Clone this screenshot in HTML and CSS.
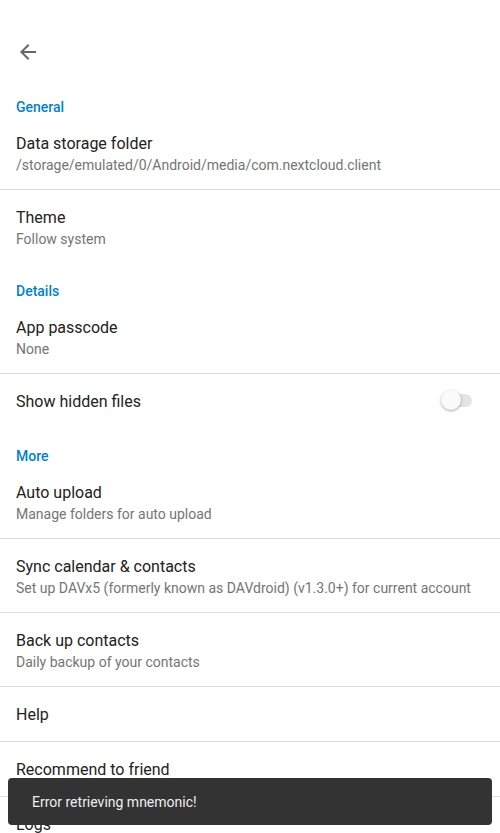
FILE: index.html
```html
<!DOCTYPE html>
<html lang="en">
<head>
    <meta charset="UTF-8">
    <meta name="viewport" content="width=device-width, initial-scale=1.0">
    <title>Settings</title>
    <link rel="stylesheet" href="styles.css">
</head>
<body>
    <header class="toolbar">
        <svg class="back" viewBox="0 0 24 24" width="24" height="24">
            <path d="M20 11H7.83l5.59-5.59L12 4l-8 8 8 8 1.41-1.41L7.83 13H20v-2z"/>
        </svg>
    </header>

    <h2 class="category">General</h2>
    <div class="pref divided">
        <div class="title">Data storage folder</div>
        <div class="summary">/storage/emulated/0/Android/media/com.nextcloud.client</div>
    </div>
    <div class="pref">
        <div class="title">Theme</div>
        <div class="summary">Follow system</div>
    </div>

    <h2 class="category">Details</h2>
    <div class="pref divided">
        <div class="title">App passcode</div>
        <div class="summary">None</div>
    </div>
    <div class="pref switch-row">
        <div class="title">Show hidden files</div>
        <span class="switch"><span class="thumb"></span></span>
    </div>

    <h2 class="category">More</h2>
    <div class="pref divided">
        <div class="title">Auto upload</div>
        <div class="summary">Manage folders for auto upload</div>
    </div>
    <div class="pref divided">
        <div class="title">Sync calendar &amp; contacts</div>
        <div class="summary">Set up DAVx5 (formerly known as DAVdroid) (v1.3.0+) for current account</div>
    </div>
    <div class="pref divided">
        <div class="title">Back up contacts</div>
        <div class="summary">Daily backup of your contacts</div>
    </div>
    <div class="pref divided">
        <div class="title">Help</div>
    </div>
    <div class="pref divided">
        <div class="title">Recommend to friend</div>
    </div>
    <div class="pref divided">
        <div class="title">Logs</div>
    </div>

    <div class="snackbar">Error retrieving mnemonic!</div>
</body>
</html>
```

FILE: styles.css
```css
body {
    font-family: Roboto, "Noto Sans", sans-serif;
    margin: 0;
    padding: 0;
    background-color: #fff;
    overflow: hidden;
}
.toolbar {
    height: 79px;
    display: flex;
    align-items: flex-end;
    padding-left: 16px;
    box-sizing: border-box;
    padding-bottom: 15px;
}
.back {
    fill: #666;
}
.category {
    margin: 0;
    padding: 20px 16px 1px;
    font-size: 14px;
    line-height: 16px;
    font-weight: 500;
    color: #0082c9;
}
.pref {
    padding: 17px 16px 14px;
}
.pref.divided {
    border-bottom: 1px solid #ddd;
}
.title {
    font-size: 16px;
    line-height: 22px;
    color: #222;
}
.pref .title:only-child {
    margin-bottom: 1px;
}
.summary {
    font-size: 14px;
    line-height: 20px;
    color: #757575;
    white-space: nowrap;
}
.switch-row {
    display: flex;
    align-items: center;
    justify-content: space-between;
    padding-bottom: 15px;
    padding-right: 28px;
}
.switch {
    position: relative;
    width: 28px;
    height: 13px;
    margin-bottom: 4px;
    border-radius: 7px;
    background-color: #e4e4e4;
}
.thumb {
    position: absolute;
    left: -3px;
    top: -4px;
    width: 20px;
    height: 20px;
    border-radius: 50%;
    background-color: #fafafa;
    box-shadow: 0 1px 3px rgba(0, 0, 0, 0.35);
}
.snackbar {
    position: fixed;
    left: 8px;
    right: 8px;
    bottom: 8px;
    height: 47px;
    display: flex;
    align-items: center;
    padding-left: 24px;
    border-radius: 4px;
    background-color: #333;
    color: #eee;
    font-size: 14px;
}
```
